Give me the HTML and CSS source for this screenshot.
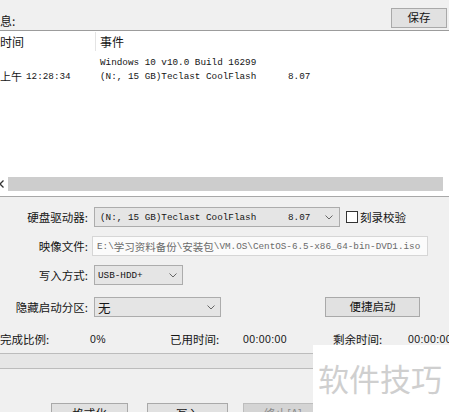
FILE: index.html
```html
<!DOCTYPE html>
<html>
<head>
<meta charset="utf-8">
<link rel="stylesheet" href="styles.css">
</head>
<body>
<div class="app">
  <div class="top">
    <span class="title">息:</span>
    <button class="btn save">保存</button>
  </div>
  <div class="log">
    <div class="log-head">
      <div class="hc1">时间</div>
      <div class="hc2">事件</div>
    </div>
    <div class="log-rows">
      <div class="row"><div class="c1"></div><div class="c2 mono">Windows 10 v10.0 Build 16299</div></div>
      <div class="row"><div class="c1"><span class="cj">上午</span> <span class="mono">12:28:34</span></div><div class="c2 mono"><span class="ev-name">(N:, 15 GB)Teclast CoolFlash</span><span>8.07</span></div></div>
    </div>
    <div class="hscroll">
      <svg class="arrow" width="6" height="8" viewBox="0 0 6 8"><path d="M4.5 0.5 L1 4 L4.5 7.5" fill="none" stroke="#333" stroke-width="1.3"/></svg>
      <div class="track"></div>
    </div>
  </div>
  <div class="form">
    <div class="field r1">
      <span class="lbl">硬盘驱动器:</span>
      <div class="select drive">
        <span class="mono drive-name">(N:, 15 GB)Teclast CoolFlash</span><span class="mono">8.07</span>
        <svg class="chev" width="8" height="5" viewBox="0 0 8 5"><path d="M0.5 0.5 L4 4 L7.5 0.5" fill="none" stroke="#666" stroke-width="1"/></svg>
      </div>
      <div class="check"><span class="box"></span><span>刻录校验</span></div>
    </div>
    <div class="field r2">
      <span class="lbl">映像文件:</span>
      <div class="input mono">E:\<span class="cjs">学习资料备份</span>\<span class="cjs">安装包</span>\VM.OS\CentOS-6.5-x86_64-bin-DVD1.iso</div>
    </div>
    <div class="field r3">
      <span class="lbl">写入方式:</span>
      <div class="select mode">
        <span class="mono">USB-HDD+</span>
        <svg class="chev" width="8" height="5" viewBox="0 0 8 5"><path d="M0.5 0.5 L4 4 L7.5 0.5" fill="none" stroke="#666" stroke-width="1"/></svg>
      </div>
    </div>
    <div class="field r4">
      <span class="lbl">隐藏启动分区:</span>
      <div class="select hide">
        <span class="cj big">无</span>
        <svg class="chev" width="8" height="5" viewBox="0 0 8 5"><path d="M0.5 0.5 L4 4 L7.5 0.5" fill="none" stroke="#666" stroke-width="1"/></svg>
      </div>
      <button class="btn quick">便捷启动</button>
    </div>
    <div class="stats">
      <span>完成比例:</span>
      <span class="num">0%</span>
      <span>已用时间:</span>
      <span class="num">00:00:00</span>
      <span>剩余时间:</span>
      <span class="num">00:00:00</span>
    </div>
    <div class="progress"></div>
    <div class="actions">
      <button class="btn fmt">格式化</button>
      <button class="btn write">写入</button>
      <button class="btn stop">终止[A]</button>
    </div>
  </div>
  <div class="watermark">软件技巧</div>
</div>
</body>
</html>
```

FILE: styles.css
```css
* { box-sizing: border-box; }
html, body {
  margin: 0;
  padding: 0;
}
body {
  width: 449px;
  height: 412px;
  overflow: hidden;
  background: #f0f0f0;
  font-family: "Noto Sans CJK SC", "Noto Sans", sans-serif;
  font-size: 11.5px;
  color: #151515;
}
.app {
  position: relative;
  width: 449px;
  height: 412px;
  overflow: hidden;
}
.mono {
  font-family: "Liberation Mono", "Noto Sans CJK SC", monospace;
  font-size: 9.3px;
}
.cj {
  font-family: "Noto Sans CJK SC", sans-serif;
  font-size: 11.5px;
}
.cj.big { font-size: 12px; }
.cjs {
  font-family: "Noto Sans CJK SC", sans-serif;
  font-size: 10.5px;
}
.btn {
  font-family: "Noto Sans CJK SC", sans-serif;
  font-size: 11.5px;
  color: #151515;
  background: #e1e1e1;
  border: 1px solid #a9a9a9;
  padding: 0;
  margin: 0;
  line-height: 1;
  display: flex;
  align-items: center;
  justify-content: center;
}
/* top bar */
.top {
  height: 31px;
  display: flex;
  align-items: flex-start;
  justify-content: space-between;
  border-bottom: 1px solid #9c9c9c;
}
.title {
  margin-top: 13px;
  line-height: 15px;
  font-size: 12px;
}
.save {
  margin-top: 8px;
  margin-right: 2px;
  width: 56px;
  height: 20px;
}
/* log list */
.log {
  height: 166px;
  background: #ffffff;
  border-bottom: 1px solid #a8a8a8;
  display: flex;
  flex-direction: column;
}
.log-head {
  height: 20px;
  display: flex;
  align-items: center;
}
.hc1 {
  width: 96px;
  height: 19px;
  border-right: 1px solid #e4e4e4;
  display: flex;
  align-items: center;
  font-size: 12px;
}
.hc2 {
  padding-left: 4px;
  font-size: 12px;
}
.log-rows {
  padding-top: 4px;
}
.row {
  display: flex;
  height: 14px;
  align-items: center;
  white-space: nowrap;
}
.c1 {
  width: 100px;
  display: flex;
  align-items: center;
  gap: 0;
}
.c1 .cj { font-size: 11px; margin-right: 4px; }
.c2 { display: flex; }
.ev-name { width: 188px; }
.hscroll {
  margin-top: auto;
  margin-bottom: 5px;
  height: 14px;
  display: flex;
  align-items: center;
}
.arrow { margin-left: -1px; }
.track {
  margin-left: 3px;
  width: 435px;
  height: 14px;
  background: #cdcdcd;
}
/* form */
.form {
  display: flex;
  flex-direction: column;
}
.field {
  display: flex;
  align-items: center;
}
.r1 { margin-top: 10px; }
.r2 { margin-top: 9px; }
.r3 { margin-top: 9px; }
.r4 { margin-top: 12px; }
.lbl {
  width: 88px;
  text-align: right;
  margin-right: 6px;
  white-space: nowrap;
}
.select {
  height: 20px;
  background: #e5e5e5;
  border: 1px solid #acacac;
  display: flex;
  align-items: center;
  padding-left: 5px;
  padding-right: 6px;
  white-space: nowrap;
}
.chev { margin-left: auto; }
.drive { width: 246px; }
.drive-name { width: 188px; }
.check {
  display: flex;
  align-items: center;
  margin-left: 6px;
}
.box {
  width: 12px;
  height: 12px;
  border: 1px solid #333;
  background: #fff;
  margin-right: 2px;
}
.input {
  margin-left: -2px;
  width: 336px;
  height: 20px;
  background: #fbfbfb;
  border: 1px solid #d6d6d6;
  display: flex;
  align-items: center;
  padding-left: 4px;
  color: #6a6a6a;
  white-space: nowrap;
  overflow: hidden;
}
.mode { width: 89px; padding-left: 3px; padding-right: 5px; }
.hide { width: 127px; padding-left: 3px; padding-right: 5px; }
.hide .cj { font-size: 12.5px; }
.quick {
  margin-left: 104px;
  width: 95px;
  height: 20px;
}
.stats {
  margin-top: 14px;
  height: 14px;
  display: grid;
  grid-template-columns: 90px 80px 73px 90px 75px 41px;
  align-items: center;
  white-space: nowrap;
}
.num {
  font-family: "Liberation Sans", sans-serif;
  font-size: 10.5px;
  letter-spacing: 0.4px;
}
.progress {
  margin-top: 8px;
  height: 16px;
  background: #e6e6e6;
  border: 1px solid #bcbcbc;
  border-left: none;
  border-right: none;
}
.actions {
  margin-top: 34px;
  display: flex;
  padding-left: 51px;
}
.fmt { width: 77px; height: 22px; }
.write { width: 81px; height: 22px; margin-left: 19px; }
.stop {
  width: 80px;
  height: 22px;
  margin-left: 15px;
  background: #d4d4d4;
  color: #8a8a8a;
  border-color: #bdbdbd;
}
/* watermark overlay */
.watermark {
  position: absolute;
  left: 313px;
  top: 345px;
  right: 0;
  bottom: 0;
  background: #ffffff;
  color: #cfcfcf;
  font-size: 31px;
  line-height: 1;
  padding-left: 5px;
  padding-top: 17px;
  letter-spacing: 0;
  white-space: nowrap;
}
```
